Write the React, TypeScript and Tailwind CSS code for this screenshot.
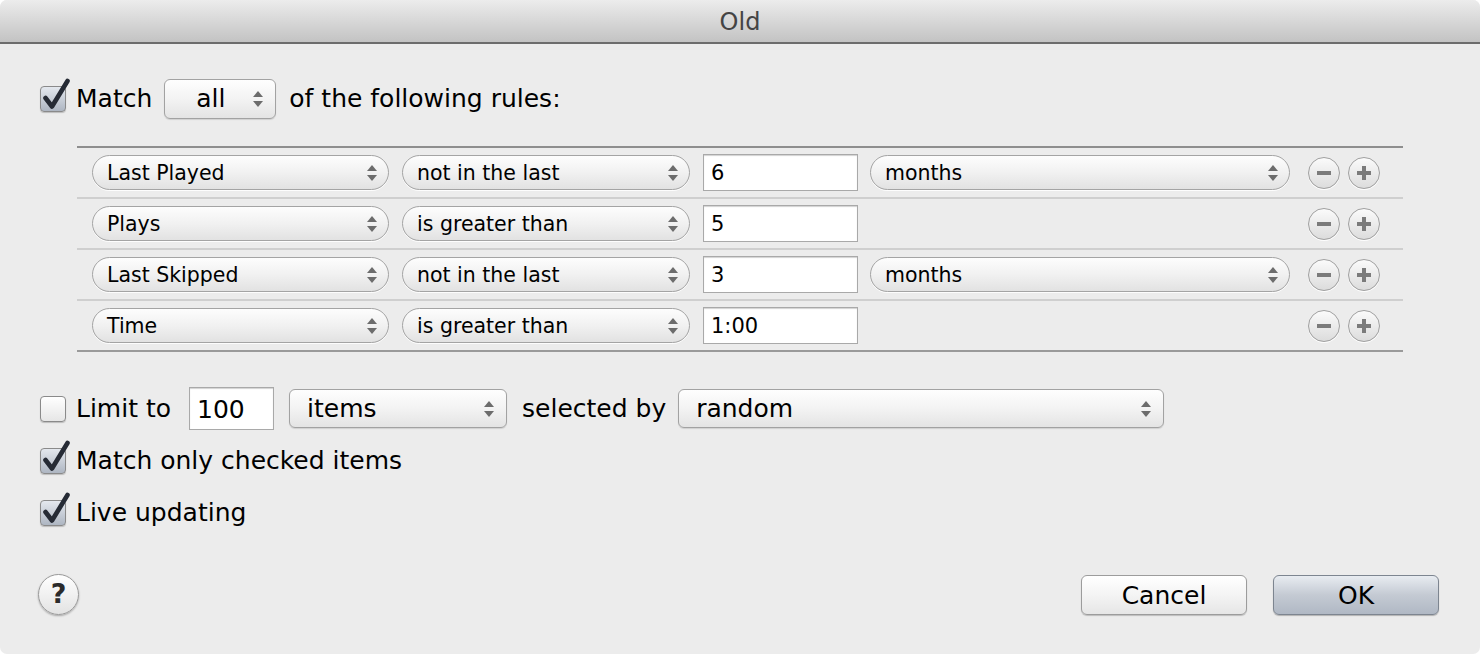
import React from "react";

const FONT = "font-['DejaVu_Sans',sans-serif]";

function Arrows() {
  return (
    <svg width="10" height="16" viewBox="0 0 10 16" className="shrink-0">
      <path d="M5 0 L10 6 H0 Z" fill="#6c6c6c" />
      <path d="M0 10 H10 L5 16 Z" fill="#6c6c6c" />
    </svg>
  );
}

function PillPopup({ label, width }: { label: string; width: string }) {
  return (
    <div
      className={`${width} flex h-[35px] shrink-0 items-center justify-between rounded-full border border-[#a4a4a4] bg-gradient-to-b from-[#fdfdfd] via-[#f1f1f1] to-[#e2e2e2] pl-[14px] pr-[11px] text-[20.5px] text-black shadow-[0_1px_0_rgba(255,255,255,0.9)]`}
    >
      <span className="pt-[1px]">{label}</span>
      <Arrows />
    </div>
  );
}

function RectPopup({ label, width, pl }: { label: string; width: string; pl: string }) {
  return (
    <div
      className={`${width} ${pl} flex h-[39px] shrink-0 items-center justify-between rounded-[6px] border border-[#a2a2a2] bg-gradient-to-b from-[#fefefe] via-[#f3f3f3] to-[#e4e4e4] pr-[12px] text-[25px] text-black shadow-[0_1px_1px_rgba(0,0,0,0.12)]`}
    >
      <span>{label}</span>
      <Arrows />
    </div>
  );
}

function TextField({ value, width, height, size }: { value: string; width: string; height: string; size: string }) {
  return (
    <div
      className={`${width} ${height} ${size} flex shrink-0 items-center border border-[#a9a9a9] bg-white pl-[7px] pt-[3px] text-black shadow-[inset_0_1px_1px_rgba(0,0,0,0.18)]`}
    >
      {value}
    </div>
  );
}

function Checkbox({ checked }: { checked: boolean }) {
  return (
    <div className="relative h-[26px] w-[26px] shrink-0">
      <div
        className={`h-full w-full rounded-[4px] border border-[#8a8a8a] shadow-[0_1px_1px_rgba(0,0,0,0.2)] ${
          checked
            ? "bg-gradient-to-b from-[#e4e8ee] via-[#c9cfd8] to-[#aeb6c2]"
            : "bg-gradient-to-b from-[#ffffff] to-[#e6e6e6]"
        }`}
      />
      {checked && (
        <svg
          width="30"
          height="34"
          viewBox="0 0 30 34"
          className="absolute left-[1px] top-[-8px]"
        >
          <path
            d="M4.5 20 L11 28.5 L26.5 3"
            fill="none"
            stroke="#262b35"
            strokeWidth="4.6"
            strokeLinecap="round"
            strokeLinejoin="round"
          />
        </svg>
      )}
    </div>
  );
}

function RoundButton({ kind }: { kind: "minus" | "plus" }) {
  return (
    <div className="flex h-[32px] w-[32px] shrink-0 items-center justify-center rounded-full border border-[#a0a0a0] bg-gradient-to-b from-[#fbfbfb] to-[#dcdcdc] shadow-[0_1px_0_rgba(255,255,255,0.9)]">
      <svg width="16" height="16" viewBox="0 0 16 16">
        <rect x="1" y="6" width="14" height="4" fill="#7b7b7b" />
        {kind === "plus" && <rect x="6" y="1" width="4" height="14" fill="#7b7b7b" />}
      </svg>
    </div>
  );
}

type Rule = {
  field: string;
  op: string;
  value: string;
  unit?: string;
};

const rules: Rule[] = [
  { field: "Last Played", op: "not in the last", value: "6", unit: "months" },
  { field: "Plays", op: "is greater than", value: "5" },
  { field: "Last Skipped", op: "not in the last", value: "3", unit: "months" },
  { field: "Time", op: "is greater than", value: "1:00" },
];

function RuleRow({ rule, last }: { rule: Rule; last: boolean }) {
  return (
    <div
      className={`flex h-[51px] items-center border-b-2 pl-[15px] ${
        last ? "border-[#9a9a9a]" : "border-[#cfcfcf]"
      }`}
    >
      <PillPopup label={rule.field} width="w-[297px]" />
      <div className="w-[13px] shrink-0" />
      <PillPopup label={rule.op} width="w-[288px]" />
      <div className="w-[13px] shrink-0" />
      <TextField value={rule.value} width="w-[155px]" height="h-[37px]" size="text-[21px]" />
      <div className="w-[12px] shrink-0" />
      {rule.unit ? (
        <PillPopup label={rule.unit} width="w-[420px]" />
      ) : (
        <div className="w-[420px] shrink-0" />
      )}
      <div className="w-[18px] shrink-0" />
      <RoundButton kind="minus" />
      <div className="w-[8px] shrink-0" />
      <RoundButton kind="plus" />
    </div>
  );
}

export default function App() {
  return (
    <div className={`h-[654px] w-[1480px] bg-white ${FONT}`}>
      <div className="flex h-full w-full flex-col overflow-hidden rounded-[7px] bg-[#ececec]">
        {/* Title bar */}
        <div className="flex h-[44px] shrink-0 items-center justify-center border-b-2 border-[#6c6c6c] bg-gradient-to-b from-[#ececec] to-[#c3c3c3] pt-[2px] text-[24px] text-[#444444]">
          Old
        </div>

        {/* Match row */}
        <div className="mt-[35px] flex h-[40px] items-center pl-[40px] text-[25px] text-black">
          <Checkbox checked />
          <span className="ml-[10px]">Match</span>
          <div className="ml-[12px] flex h-[40px] w-[112px] items-center justify-between rounded-[6px] border border-[#a2a2a2] bg-gradient-to-b from-[#fefefe] via-[#f3f3f3] to-[#e4e4e4] pl-[31px] pr-[12px] text-[25px] shadow-[0_1px_1px_rgba(0,0,0,0.12)]">
            <span>all</span>
            <Arrows />
          </div>
          <span className="ml-[13px]">of the following rules:</span>
        </div>

        {/* Rules */}
        <div className="ml-[77px] mt-[27px] w-[1326px] border-t-2 border-[#8e8e8e]">
          {rules.map((r, i) => (
            <RuleRow key={i} rule={r} last={i === rules.length - 1} />
          ))}
        </div>

        {/* Limit row */}
        <div className="mt-[35px] flex h-[43px] items-center pl-[40px] text-[25px] text-black">
          <Checkbox checked={false} />
          <span className="ml-[10px]">Limit to</span>
          <div className="ml-[18px]">
            <TextField value="100" width="w-[85px]" height="h-[43px]" size="text-[25px]" />
          </div>
          <div className="ml-[15px]">
            <RectPopup label="items" width="w-[218px]" pl="pl-[17px]" />
          </div>
          <span className="ml-[15px]">selected by</span>
          <div className="ml-[12px]">
            <RectPopup label="random" width="w-[486px]" pl="pl-[17px]" />
          </div>
        </div>

        <div className="mt-[9px] flex h-[43px] items-center pl-[40px] text-[25px] text-black">
          <Checkbox checked />
          <span className="ml-[10px]">Match only checked items</span>
        </div>

        <div className="mt-[9px] flex h-[43px] items-center pl-[40px] text-[25px] text-black">
          <Checkbox checked />
          <span className="ml-[10px]">Live updating</span>
        </div>

        {/* Footer */}
        <div className="mt-[40px] flex items-center pl-[38px] pr-[41px]">
          <div className="flex h-[41px] w-[41px] items-center justify-center rounded-full border border-[#9a9a9a] bg-gradient-to-b from-[#ffffff] to-[#e3e3e3] pb-[1px] text-[27px] font-bold text-[#2b2b2b] shadow-[0_1px_2px_rgba(0,0,0,0.3)]">
            ?
          </div>
          <div className="flex-1" />
          <div className="flex h-[40px] w-[166px] items-center justify-center rounded-[6px] border border-[#9c9c9c] bg-gradient-to-b from-[#ffffff] via-[#f4f4f4] to-[#e6e6e6] pt-[2px] text-[25px] text-black shadow-[0_1px_1px_rgba(0,0,0,0.2)]">
            Cancel
          </div>
          <div className="ml-[26px] flex h-[40px] w-[166px] items-center justify-center rounded-[6px] border border-[#7d8590] bg-gradient-to-b from-[#e8ecf1] via-[#c4cad3] to-[#b0b8c4] pt-[2px] text-[25px] text-black shadow-[0_1px_1px_rgba(0,0,0,0.25)]">
            OK
          </div>
        </div>
      </div>
    </div>
  );
}
